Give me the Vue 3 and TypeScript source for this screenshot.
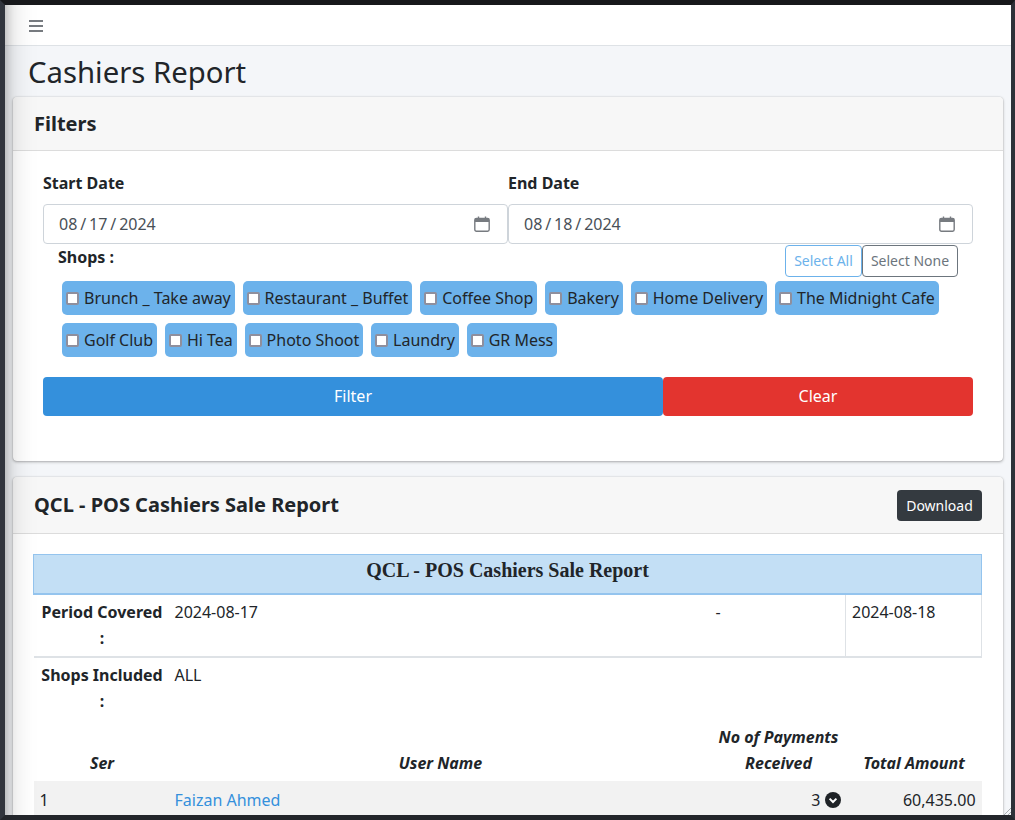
<script setup lang="ts">
const shops: string[] = [
  'Brunch _ Take away',
  'Restaurant _ Buffet',
  'Coffee Shop',
  'Bakery',
  'Home Delivery',
  'The Midnight Cafe',
  'Golf Club',
  'Hi Tea',
  'Photo Shoot',
  'Laundry',
  'GR Mess'
]

const dates: { label: string, value: string }[] = [
  { label: 'Start Date', value: '08 / 17 / 2024' },
  { label: 'End Date', value: '08 / 18 / 2024' }
]
</script>

<template>
  <div class="window">
    <div class="sidebar"></div>
    <div class="wrapper">
      <nav class="navbar">
        <svg class="bars" viewBox="0 0 14 12" width="14" height="12">
          <path d="M0 1h14M0 6h14M0 11h14" stroke="#777b80" stroke-width="2" fill="none" />
        </svg>
      </nav>
      <main class="content">
        <h1 class="page-title">Cashiers Report</h1>

        <section class="card">
          <header class="card-header">
            <h2>Filters</h2>
          </header>
          <div class="card-body filters">
            <div class="dates">
              <div v-for="d in dates" :key="d.label" class="date-field">
                <label>{{ d.label }}</label>
                <div class="date-input">
                  <span>{{ d.value }}</span>
                  <svg viewBox="0 0 16 16" width="16" height="16">
                    <path d="M4.5 0.5v2.4M11.5 0.5v2.4" stroke="#777b80" stroke-width="1.4" fill="none" />
                    <rect x="0.8" y="2.5" width="14.4" height="12.7" rx="1.6" fill="none" stroke="#777b80" stroke-width="1.4" />
                    <rect x="1" y="2.5" width="14" height="3.5" fill="#777b80" />
                  </svg>
                </div>
              </div>
            </div>

            <div class="shops-head">
              <strong>Shops :</strong>
              <div class="select-btns">
                <button class="btn-all">Select All</button>
                <button class="btn-none">Select None</button>
              </div>
            </div>

            <div class="chips">
              <label v-for="s in shops" :key="s" class="chip">
                <input type="checkbox" />
                <span>{{ s }}</span>
              </label>
            </div>

            <div class="actions">
              <button class="btn-filter">Filter</button>
              <button class="btn-clear">Clear</button>
            </div>
          </div>
        </section>

        <section class="card">
          <header class="card-header report-header">
            <h2>QCL - POS Cashiers Sale Report</h2>
            <button class="btn-download">Download</button>
          </header>
          <div class="card-body report">
            <table>
              <colgroup>
                <col class="col-a" />
                <col class="col-b" />
                <col class="col-c" />
                <col class="col-d" />
              </colgroup>
              <tbody>
                <tr class="title-row">
                  <td colspan="4">QCL - POS Cashiers Sale Report</td>
                </tr>
                <tr class="period-row">
                  <th>Period Covered :</th>
                  <td>2024-08-17</td>
                  <td>-</td>
                  <td class="end-date">2024-08-18</td>
                </tr>
                <tr class="included-row">
                  <th>Shops Included :</th>
                  <td colspan="3">ALL</td>
                </tr>
                <tr class="head-row">
                  <th>Ser</th>
                  <th>User Name</th>
                  <th>No of Payments Received</th>
                  <th>Total Amount</th>
                </tr>
                <tr class="data-row">
                  <td>1</td>
                  <td class="user-name">Faizan Ahmed</td>
                  <td class="payments">
                    3
                    <svg viewBox="0 0 16 16" width="16" height="16">
                      <circle cx="8" cy="8" r="8" fill="#1f2327" />
                      <path d="M4.6 6.6L8 10l3.4-3.4" stroke="#fff" stroke-width="2" fill="none" />
                    </svg>
                  </td>
                  <td class="amount">60,435.00</td>
                </tr>
              </tbody>
            </table>
          </div>
        </section>
      </main>
    </div>
    <svg class="grip" viewBox="0 0 14 14" width="14" height="14">
      <path d="M14 1L1 14M14 5L5 14M14 9L9 14M14 12.5L12.5 14" stroke="#a9adb1" stroke-width="1" fill="none" />
    </svg>
  </div>
</template>

<style>
html, body {
  margin: 0;
  overflow: hidden;
}
</style>

<style scoped>
.window {
  position: relative;
  box-sizing: border-box;
  width: 1015px;
  height: 820px;
  border-style: solid;
  border-width: 5px 4px 5px 5px;
  border-color: #17181b #2d3138 #23262b #31353d;
  overflow: hidden;
  font-family: "Noto Sans", sans-serif;
  font-size: 16px;
  color: #212529;
}
.sidebar {
  position: absolute;
  top: -40px;
  bottom: -40px;
  left: -250px;
  width: 250px;
  z-index: 5;
  pointer-events: none;
  box-shadow: 0 14px 28px rgba(0, 0, 0, 0.25), 0 10px 10px rgba(0, 0, 0, 0.22);
}
.wrapper {
  height: 100%;
  overflow: hidden;
  background: #f4f6f9;
}
.navbar {
  box-sizing: border-box;
  height: 41px;
  padding: 15px 0 0 24px;
  background: #fff;
  border-bottom: 1px solid #dee2e6;
}
.bars {
  display: block;
}
.content {
  padding: 0 8px;
}
.page-title {
  margin: 0 0 3px;
  padding: 5px 0 0 15px;
  height: 43px;
  font-size: 29.3px;
  font-weight: 400;
  line-height: 42px;
}
.card {
  margin-bottom: 16px;
  background: #fff;
  border-radius: 4px;
  box-shadow: 0 0 1px rgba(0, 0, 0, 0.3), 0 1px 3px rgba(0, 0, 0, 0.3);
}
.card-header {
  box-sizing: border-box;
  height: 54px;
  padding: 0 21px;
  display: flex;
  align-items: center;
  background: #f7f7f7;
  border-bottom: 1px solid #dcdcdc;
  border-radius: 4px 4px 0 0;
}
.card-header h2 {
  margin: 0;
  font-size: 20px;
  font-weight: 700;
}
.report-header {
  height: 57px;
  justify-content: space-between;
}
.report-header h2 {
  margin-top: -2px;
}
.filters {
  height: 310px;
  box-sizing: border-box;
  padding: 20px 30px 0;
}
.dates {
  display: flex;
}
.date-field {
  flex: 1;
}
.date-field label {
  display: block;
  height: 33px;
  line-height: 24px;
  font-weight: 700;
}
.date-input {
  box-sizing: border-box;
  height: 40px;
  padding: 0 17px 0 15px;
  display: flex;
  align-items: center;
  justify-content: space-between;
  border: 1px solid #ced4da;
  border-radius: 4px;
  color: #495057;
  word-spacing: -1.25px;
}
.shops-head {
  display: flex;
  justify-content: space-between;
  padding: 1px 15px 0 15px;
  height: 37px;
  box-sizing: border-box;
}
.shops-head strong {
  line-height: 24px;
}
.select-btns {
  display: flex;
  height: 32px;
}
.select-btns button {
  box-sizing: border-box;
  padding: 0 0 2px;
  white-space: nowrap;
  font: 14px "Noto Sans", sans-serif;
  background: #fff;
  border-radius: 4px;
  border: 1px solid;
}
.btn-all {
  width: 77px;
  color: #6cb2eb;
  border-color: #6cb2eb;
}
.btn-none {
  width: 96px;
  color: #6c757d;
  border-color: #6c757d;
}
.chips {
  display: flex;
  flex-wrap: wrap;
  gap: 8px;
  padding-left: 19px;
}
.chip {
  box-sizing: border-box;
  height: 34px;
  padding: 0 3.8px 0 4px;
  display: flex;
  align-items: center;
  background: #6cb2eb;
  border-radius: 5px;
}
.chip input {
  appearance: none;
  box-sizing: border-box;
  width: 13px;
  height: 13px;
  margin: 0 5px 0 0;
  background: #fff;
  border: 2px solid #8f8f9d;
  border-radius: 2px;
}
.actions {
  display: flex;
  margin-top: 20px;
}
.actions button {
  box-sizing: border-box;
  height: 39px;
  padding: 0 0 2px;
  border: 0;
  border-radius: 4px;
  color: #fff;
  font: 16px "Noto Sans", sans-serif;
}
.btn-filter {
  width: 620px;
  background: #3490dc;
}
.btn-clear {
  width: 310px;
  background: #e3342f;
}
.btn-download {
  box-sizing: border-box;
  width: 85px;
  height: 31px;
  padding: 0;
  background: #343a40;
  color: #fff;
  border: 0;
  border-radius: 4px;
  font: 14px "Noto Sans", sans-serif;
}
.report {
  padding: 20px 21px;
}
table {
  width: 948px;
  margin-left: -1px;
  table-layout: fixed;
  border-collapse: collapse;
  line-height: 26px;
}
.col-a { width: 133px; }
.col-b { width: 541px; }
.col-c { width: 138px; }
.col-d { width: 136px; }
th, td {
  padding: 4px 8px;
  vertical-align: top;
  text-align: left;
}
th {
  padding: 4px 3px 4px 7px;
  text-align: center;
  font-weight: 700;
}
.title-row td {
  height: 39px;
  box-sizing: border-box;
  padding: 0 0 6px;
  vertical-align: middle;
  text-align: center;
  font: 700 20px "Liberation Serif", serif;
  background: #c3dff5;
  border: 1px solid #94c4ee;
  border-bottom-width: 2px;
}
.period-row th, .period-row td {
  padding-bottom: 5px;
  border-bottom: 2px solid #dee2e6;
}
.end-date {
  padding-left: 6px;
  border-left: 1px solid #dee2e6;
  border-right: 1px solid #dee2e6;
}
.included-row th {
  padding-bottom: 6px;
}
.head-row th {
  padding-bottom: 5px;
  vertical-align: bottom;
  font-style: italic;
}
.head-row th:nth-child(2) {
  padding-left: 10px;
}
.head-row th:nth-child(3) {
  padding: 4px 0 5px 4px;
}
.head-row th:nth-child(4) {
  padding-right: 6px;
}
.data-row td {
  height: 38px;
  box-sizing: border-box;
  background: #f2f2f2;
  padding: 6px;
}
.user-name {
  color: #3490dc;
  padding-left: 8px !important;
}
.payments {
  text-align: right;
  white-space: nowrap;
  padding-right: 5px !important;
}
.payments svg {
  vertical-align: -2px;
}
.amount {
  text-align: right;
}
.grip {
  position: absolute;
  right: -3px;
  bottom: -3px;
}
</style>
